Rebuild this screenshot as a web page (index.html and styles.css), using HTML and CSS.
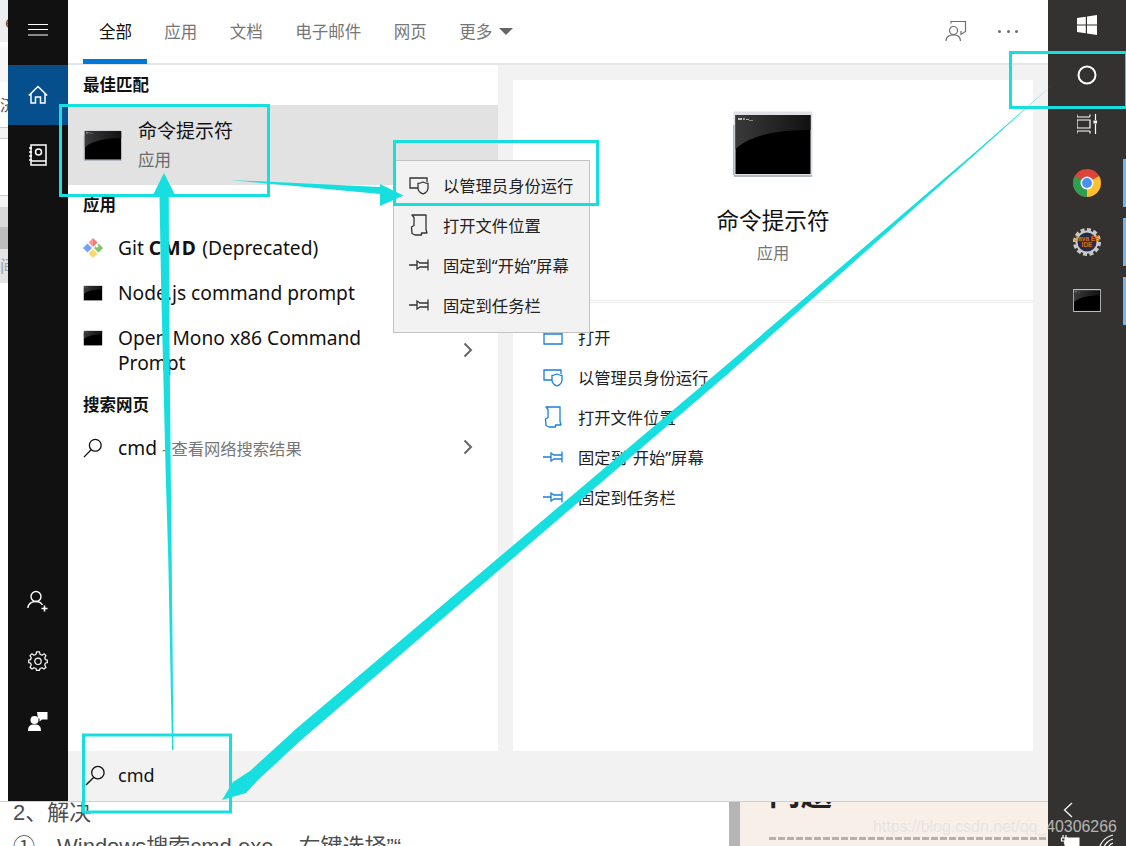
FILE: index.html
```html
<!DOCTYPE html>
<html lang="zh-CN">
<head>
<meta charset="utf-8">
<title>Windows 搜索</title>
<link rel="stylesheet" href="styles.css">
</head>
<body>
<svg class="defs" width="0" height="0" aria-hidden="true">
  <defs>
    <linearGradient id="cmdGlow" x1="0" y1="0" x2="1" y2="0">
      <stop offset="0" stop-color="#3a3a3a"/>
      <stop offset="1" stop-color="#111"/>
    </linearGradient>
    <symbol id="cmdIcon" viewBox="0 0 80 66">
      <rect x="0.5" y="0.5" width="79" height="65" fill="#dfe1e6"/>
      <rect x="1" y="64" width="78" height="2" fill="#b4b9c3"/>
      <rect x="0" y="14" width="1.5" height="50" fill="#b0b6c0"/>
      <rect x="2.5" y="4" width="75" height="59" fill="#000"/>
      <path d="M2.5 4H77.5V19C50 19 20 22 2.500 38Z" fill="url(#cmdGlow)"/>
      <rect x="5" y="7" width="4" height="2" fill="#bbb"/>
      <rect x="10" y="7" width="2" height="2" fill="#999"/>
      <rect x="13" y="8" width="3" height="1" fill="#aaa"/>
      <rect x="16" y="9" width="4" height="1" fill="#888"/>
    </symbol>
    <symbol id="shieldIcon" viewBox="0 0 20 20">
      <path d="M9 13H1V3H18V7" fill="none" stroke="currentColor" stroke-width="1.300"/>
      <path d="M9 8.500C11 8.500 12 7.800 14 7C16 7.800 17 8.500 19 8.500V13C19 16 16.500 18 14 19C11.500 18 9 16 9 13Z" fill="#fff0" stroke="currentColor" stroke-width="1.300"/>
    </symbol>
    <symbol id="folderIcon" viewBox="0 0 20 22">
      <path d="M3 1H17V15.500L18 19H12.500V21H6L3 19.500L2.500 13L5 11.500V3.500L3 1ZM5 3.500V11.500" fill="none" stroke="currentColor" stroke-width="1.300" stroke-linejoin="round"/>
    </symbol>
    <symbol id="pinIcon" viewBox="0 0 20 14">
      <path d="M0 7H8M8 3L11 5H19V1.500V12.500V9H11L8 11Z" fill="none" stroke="currentColor" stroke-width="1.300"/>
    </symbol>
    <symbol id="openIcon" viewBox="0 0 20 20">
      <path d="M1 3H19V17H1ZM1 7H19" fill="none" stroke="currentColor" stroke-width="1.300"/>
    </symbol>
    <symbol id="searchIcon" viewBox="0 0 22 22">
      <circle cx="13.500" cy="8" r="6.500" fill="none" stroke="currentColor" stroke-width="1.400"/>
      <path d="M9 13L1 21" fill="none" stroke="currentColor" stroke-width="1.400"/>
    </symbol>
    <symbol id="chevronIcon" viewBox="0 0 10 16">
      <path d="M1.500 1.500L8 8L1.500 14.500" fill="none" stroke="currentColor" stroke-width="2"/>
    </symbol>
  </defs>
</svg>

<div class="screen">
  <div class="desktop">
    <div class="window-row">
      <div class="page-edge">
        <div class="edge edge-a"><span class="edge-glyph edge-glyph-e">e</span></div>
        <div class="edge edge-b"></div>
        <div class="edge edge-c"></div>
        <div class="edge edge-d"><span class="edge-glyph">济</span></div>
        <div class="edge edge-e"></div>
        <div class="edge edge-f"></div>
        <div class="edge edge-g"></div>
        <div class="edge edge-h"></div>
        <div class="edge edge-i"></div>
        <div class="edge edge-j"><span class="edge-glyph">间</span></div>
        <div class="edge edge-k"></div>
      </div>

      <nav class="rail">
        <div class="rail-group">
          <div class="rail-btn rail-menu">
            <svg width="20" height="14" viewBox="0 0 20 14"><path d="M0 1.500H20M0 6.500H20M0 12H20" stroke="#fff" stroke-width="1.200"/></svg>
          </div>
          <div class="rail-btn rail-on">
            <svg width="20" height="20" viewBox="0 0 20 20"><path d="M0.800 10.500L10 1.500L19.200 10.500M3 8.500V18H7.500V12H12.500V18H17V8.500" fill="none" stroke="#fff" stroke-width="1.500"/></svg>
          </div>
          <div class="rail-btn">
            <svg width="20" height="22" viewBox="0 0 20 22"><path d="M3 1H18V21H3ZM1 4H4M1 8H4M1 12H4M1 16H4M3 17H18" fill="none" stroke="#fff" stroke-width="1.500"/><circle cx="10.500" cy="8" r="3" fill="none" stroke="#fff" stroke-width="1.500"/></svg>
          </div>
        </div>
        <div class="rail-group">
          <div class="rail-btn">
            <svg width="22" height="22" viewBox="0 0 22 22"><circle cx="9" cy="6.500" r="5" fill="none" stroke="#fff" stroke-width="1.400"/><path d="M0.800 18C1.500 13.500 4.500 11.500 9 11.500C12 11.500 14 12.500 15.500 15" fill="none" stroke="#fff" stroke-width="1.400"/><path d="M14.500 18.500H20.500M17.500 15.500V21.500" stroke="#fff" stroke-width="1.600"/></svg>
          </div>
          <div class="rail-btn">
            <svg width="20" height="20" viewBox="0 0 20 20"><path d="M8.500 0.800H11.500L12 3.300L14 4.200L16.200 2.800L18 4.600L16.700 6.800L17.500 8.700L19.300 9V11.700L17.500 12L16.700 14L18 16.200L16 18L14 16.700L12 17.500L11.500 19.300H8.500L8 17.500L6 16.700L4 18L2 16.200L3.300 14L2.500 12L0.700 11.700V9L2.500 8.700L3.300 6.800L2 4.600L3.800 2.800L6 4.200L8 3.300Z" fill="none" stroke="#fff" stroke-width="1.200" stroke-linejoin="round"/><circle cx="10" cy="10.300" r="3.200" fill="none" stroke="#fff" stroke-width="1.200"/></svg>
          </div>
          <div class="rail-btn">
            <svg width="20" height="20" viewBox="0 0 20 20"><circle cx="6.500" cy="9" r="4" fill="#fff"/><path d="M0 20C0 15 2 13.500 6.500 13.500C11 13.500 13 15 13 20Z" fill="#fff"/><path d="M9 1H19.500V8.500H14L11.500 10.500V7.500H10Z" fill="#fff"/></svg>
          </div>
        </div>
      </nav>

      <main class="search">
        <header class="tabs">
          <div class="tab-list">
            <span class="tab tab-on">全部</span>
            <span class="tab">应用</span>
            <span class="tab">文档</span>
            <span class="tab">电子邮件</span>
            <span class="tab">网页</span>
            <span class="tab">更多<i class="caret"></i></span>
          </div>
          <div class="tab-tools">
            <svg class="tool-icon" width="22" height="22" viewBox="0 0 22 22"><path d="M6 3.500V1.500H20.500V11.500L16 14.500V11" fill="none" stroke="#6e6e6e" stroke-width="1.200"/><circle cx="8.500" cy="10.500" r="4" fill="none" stroke="#6e6e6e" stroke-width="1.200"/><path d="M1 21C1 16.500 4 14.800 8.500 14.800C13 14.800 15.500 16.500 15.500 21" fill="none" stroke="#6e6e6e" stroke-width="1.200"/></svg>
            <span class="dots"><i></i><i></i><i></i></span>
          </div>
        </header>

        <div class="panes">
          <section class="results">
            <h2 class="group-title">最佳匹配</h2>
            <div class="best">
              <svg class="best-icon"><use href="#cmdIcon"/></svg>
              <div class="best-text">
                <div class="best-name">命令提示符</div>
                <div class="best-kind">应用</div>
              </div>
            </div>
            <h2 class="group-title">应用</h2>
            <div class="row">
              <svg class="row-icon" viewBox="0 0 20 20"><path d="M10 0L14.500 4.500L10 9Z" fill="#f47a7a"/><path d="M10 0L5.500 4.500L10 9Z" fill="#f79a9a"/><path d="M0 10L4.500 5.500L9 10L4.500 14.500Z" fill="#6ea5f7"/><path d="M10 11L14.500 15.500L10 20L5.500 15.500Z" fill="#f9d86c"/><path d="M11 10L15.500 5.500L20 10L15.500 14.500Z" fill="#7cc562"/><circle cx="14" cy="8" r="1.500" fill="#fff"/></svg>
              <span class="row-text">Git <b class="row-strong">CMD</b> (Deprecated)</span>
            </div>
            <div class="row">
              <svg class="row-icon row-icon-cmd"><use href="#cmdIcon"/></svg>
              <span class="row-text">Node.js command prompt</span>
            </div>
            <div class="row row-tall">
              <svg class="row-icon row-icon-cmd row-icon-top"><use href="#cmdIcon"/></svg>
              <span class="row-text row-wrap">Open Mono x86 Command Prompt</span>
              <svg class="chev"><use href="#chevronIcon"/></svg>
            </div>
            <h2 class="group-title">搜索网页</h2>
            <div class="row">
              <svg class="row-icon"><use href="#searchIcon"/></svg>
              <span class="row-text row-text-web">cmd <small class="row-hint">- 查看网络搜索结果</small></span>
              <svg class="chev chev-web"><use href="#chevronIcon"/></svg>
            </div>
          </section>

          <section class="detail">
            <div class="hero">
              <svg class="hero-icon"><use href="#cmdIcon"/></svg>
              <div class="hero-name">命令提示符</div>
              <div class="hero-kind">应用</div>
            </div>
            <ul class="actions">
              <li class="action"><svg class="action-icon"><use href="#openIcon"/></svg>打开</li>
              <li class="action"><svg class="action-icon"><use href="#shieldIcon"/></svg>以管理员身份运行</li>
              <li class="action"><svg class="action-icon action-tall"><use href="#folderIcon"/></svg>打开文件位置</li>
              <li class="action"><svg class="action-icon action-pin"><use href="#pinIcon"/></svg>固定到“开始”屏幕</li>
              <li class="action"><svg class="action-icon action-pin"><use href="#pinIcon"/></svg>固定到任务栏</li>
            </ul>
          </section>
        </div>

        <div class="query">
          <svg class="query-icon"><use href="#searchIcon"/></svg>
          <span class="query-text">cmd</span>
        </div>
      </main>
    </div>

    <div class="article">
      <div class="article-text">
        <div class="article-h">2、解决</div>
        <div class="article-p"><span class="article-num">①</span>Windows搜索cmd.exe<span class="article-comma">，</span>右键选择”“</div>
      </div>
      <div class="quote">
        <div class="quote-title">问题</div>
        <div class="quote-rule"></div>
      </div>
    </div>
  </div>

  <aside class="taskbar">
    <div class="task-top">
      <div class="task-btn">
        <svg width="20" height="20" viewBox="0 0 20 20"><path d="M0 3L8.800 1.700V9.400H0ZM10 1.500L20 0V9.400H10ZM0 10.600H8.800V18.300L0 17ZM10 10.600H20V20L10 18.500Z" fill="#fff"/></svg>
      </div>
      <div class="task-btn">
        <svg width="20" height="20" viewBox="0 0 20 20"><circle cx="10" cy="10" r="8.500" fill="none" stroke="#fff" stroke-width="2"/></svg>
      </div>
      <div class="task-btn task-view">
        <svg width="20" height="20" viewBox="0 0 20 20"><path d="M0 2.500V0.500M13 0.500V2.500M0 3H13M0 6H13V14H0ZM0 17H13M0 17V19.500M13 17V19.500M18.500 0V6M18.500 10V20" fill="none" stroke="#fff" stroke-width="1.200"/><rect x="16.500" y="6.500" width="3.500" height="3" fill="#fff"/></svg>
      </div>
      <div class="task-app task-run">
        <svg width="28" height="28" viewBox="0 0 28 28"><circle cx="14" cy="14" r="14" fill="#db4437"/><path d="M14 14L26.100 7A14 14 0 0 1 14 28Z" fill="#fbc02d"/><path d="M14 14L14 28A14 14 0 0 1 1.900 7Z" fill="#2e9e4f"/><circle cx="14" cy="14" r="6.500" fill="#fff"/><circle cx="14" cy="14" r="5" fill="#4d8ff0"/></svg>
      </div>
      <div class="task-app task-run">
        <svg width="28" height="28" viewBox="0 0 28 28"><circle cx="14" cy="14" r="12.500" fill="none" stroke="#c9c9c9" stroke-width="3" stroke-dasharray="4 2.500"/><circle cx="14" cy="14" r="10.500" fill="#2a2a48" stroke="#c9c9c9" stroke-width="2"/><text class="java-text" x="14" y="12.500">Java EE</text><text class="java-text" x="14" y="19">IDE</text></svg>
      </div>
      <div class="task-app task-run">
        <svg class="task-cmd"><use href="#cmdIcon"/></svg>
      </div>
    </div>
    <div class="tray">
      <svg class="tray-chev" width="10" height="16" viewBox="0 0 10 16"><path d="M9 1L1.500 8L9 15" fill="none" stroke="#fff" stroke-width="1.200"/></svg>
      <div class="tray-icons">
        <svg width="20" height="16" viewBox="0 0 20 16"><path d="M3 1V4M6 1V4M1.500 4H7.500V7H1.500ZM4.500 7V10" fill="none" stroke="#fff" stroke-width="1.200"/><rect x="4.500" y="3.500" width="15" height="12" fill="#fff"/></svg>
        <svg width="20" height="16" viewBox="0 0 20 16"><path d="M2 16C3 9 8 3 16 1M6 16C7 11 11 6 16 5M10 16C11 13 13 10 16 9" fill="none" stroke="#fff" stroke-width="1.200"/></svg>
      </div>
    </div>
  </aside>

  <div class="context-menu">
    <div class="menu-item"><svg class="menu-icon"><use href="#shieldIcon"/></svg>以管理员身份运行</div>
    <div class="menu-item"><svg class="menu-icon menu-tall"><use href="#folderIcon"/></svg>打开文件位置</div>
    <div class="menu-item"><svg class="menu-icon menu-pin"><use href="#pinIcon"/></svg>固定到“开始”屏幕</div>
    <div class="menu-item"><svg class="menu-icon menu-pin"><use href="#pinIcon"/></svg>固定到任务栏</div>
  </div>

  <svg class="marks" width="1126" height="846" viewBox="0 0 1126 846" aria-hidden="true">
    <g fill="none" stroke="#17dfdf" stroke-width="3">
      <rect x="60.500" y="105.500" width="208" height="90"/>
      <rect x="394.500" y="141.500" width="203" height="63"/>
      <rect x="1010.500" y="52.500" width="116" height="55"/>
      <rect x="83.500" y="735" width="147" height="77"/>
    </g>
    <g fill="#17dfdf">
      <path d="M230 180L380 187V184L403.500 195.500L380 206V194Z"/>
      <path d="M173.500 750H172L168.300 560L165.600 470L161 280L159.500 195H153L164 173L175 195H168.800L169 280L170.700 470L171.700 560Z"/>
      <path d="M1052 85L980 150L730 372L300 741L258 780L246 793L222 800L233 782L250 771L297 728L730 362L980 148Z"/>
    </g>
  </svg>

  <div class="watermark">https://blog.csdn.net/qq_40306266</div>
</div>
</body>
</html>
```
FILE: styles.css
```css
* { box-sizing: border-box; }
html, body { margin: 0; padding: 0; }
body {
  width: 1126px;
  height: 846px;
  overflow: hidden;
  background: #fff;
  font-family: "Noto Sans", "Noto Sans CJK SC", sans-serif;
  color: #000;
}
.defs { position: absolute; }
svg { display: block; flex: none; }

.screen { position: relative; display: flex; width: 1126px; height: 846px; overflow: hidden; }
.desktop { width: 1048px; display: flex; flex-direction: column; }
.window-row { display: flex; height: 802px; flex: none; border-bottom: 1px solid #cfcfcf; }

/* sliver of the page behind the start menu */
.page-edge { width: 8px; display: flex; flex-direction: column; overflow: hidden; background: #fff; }
.edge { flex: none; overflow: hidden; position: relative; }
.edge-glyph { display: block; font-size: 16px; line-height: 18px; color: #555; white-space: nowrap; }
.edge-glyph-e { margin-left: 5px; }
.edge-a { height: 42px; background: #eceeef; padding-top: 13px; }
.edge-b { height: 5px; background: #fff; }
.edge-c { height: 35px; background: #f7f7f7; }
.edge-d { height: 45px; background: #fff; padding-top: 14px; }
.edge-e { height: 12px; background: #f3f3f3; border-top: 1px solid #ccc; border-bottom: 1px solid #ccc; }
.edge-f { height: 56px; background: #fff; }
.edge-g { height: 12px; background: #f4f4f4; border-top: 1px solid #ccc; }
.edge-h { height: 20px; background: #d8d8d8; }
.edge-i { height: 22px; background: #bdbdbd; }
.edge-j { height: 34px; background: #e4e4e4; padding-top: 8px; }
.edge-j .edge-glyph { color: #98a2ad; }
.edge-k { flex: 1; background: #fff; }

/* dark left rail */
.rail { width: 60px; background: #111; display: flex; flex-direction: column; justify-content: space-between; padding-bottom: 50px; }
.rail-btn { height: 60px; display: flex; align-items: center; justify-content: center; }
.rail-menu { height: 65px; padding-bottom: 5px; }
.rail-on { background: #054f8c; }

/* search flyout */
.search { flex: 1; display: flex; flex-direction: column; min-width: 0; background: #f2f2f2; }
.tabs { height: 65px; flex: none; background: #fff; border-bottom: 2px solid #e6e6e6; display: flex; justify-content: space-between; padding-left: 15px; }
.tab-list { display: flex; height: 64px; }
.tab { display: flex; align-items: center; padding: 3px 16.250px 0; height: 64px; font-size: 16.500px; color: #767676; border-bottom: 5px solid transparent; }
.tab-on { color: #111; border-bottom-color: #0078d7; padding: 3px 15px 0 16px; margin-right: 1px; }
.caret { width: 0; height: 0; margin-left: 7px; border: 7px solid transparent; border-top: 7px solid #666; border-bottom: 0; }
.tab-tools { display: flex; align-items: center; gap: 31px; padding-right: 30px; height: 62px; }
.dots { display: flex; gap: 5.500px; }
.dots i { width: 3px; height: 3px; border-radius: 50%; background: #6e6e6e; }

.panes { flex: 1; display: flex; min-height: 0; }
.results { width: 430px; background: #fff; flex: none; position: relative; }
.group-title { margin: 0; height: 40px; padding: 0 0 2px 15px; display: flex; align-items: center; font-size: 16.500px; font-weight: 700; color: #111; }
.best { height: 80px; background: #e2e2e2; display: flex; align-items: center; padding-left: 15px; gap: 15px; }
.best-icon { width: 40px; height: 32px; }
.best-text { display: flex; flex-direction: column; }
.best-name { font-size: 19px; line-height: 28px; color: #111; margin-top: -1px; }
.best-kind { font-size: 16.500px; line-height: 24px; color: #6b6b6b; margin-top: 3px; }

.row { position: relative; height: 45px; display: flex; align-items: center; padding: 0 50px 0 15px; font-size: 19.200px; color: #111; gap: 15px; }
.row-tall { height: 70px; }
.row-icon { width: 20px; height: 20px; }
.row-icon-cmd { height: 16px; }
.row-icon-top { align-self: flex-start; margin-top: 15px; }
.row-text { line-height: 25px; white-space: nowrap; }
.row-text-web { padding-top: 2px; }
.row-strong { letter-spacing: 1.300px; }
.row-wrap { white-space: normal; width: 255px; }
.row-hint { font-size: 16.300px; color: #767676; }
.chev { position: absolute; right: 25px; top: 50%; margin-top: -8px; width: 10px; height: 16px; color: #666; }
.chev-web { margin-top: -9px; }

.detail { width: 520px; margin: 15px 15px 0; background: #fff; flex: none; }
.hero { height: 223px; border-bottom: 3px double #ececec; display: flex; flex-direction: column; align-items: center; padding-top: 31px; }
.hero-icon { width: 80px; height: 66px; }
.hero-name { margin-top: 27px; font-size: 22.600px; line-height: 34px; color: #111; }
.hero-kind { margin-top: 3px; font-size: 16.300px; line-height: 24px; color: #767676; }
.actions { list-style: none; margin: 14px 0 0; padding: 0 0 0 30px; }
.action { height: 40px; display: flex; align-items: center; gap: 15px; font-size: 16.300px; color: #222; }
.action-icon { width: 20px; height: 20px; color: #1a7fdc; }
.action-tall { height: 22px; }
.action-pin { height: 14px; }

.query { height: 50px; flex: none; display: flex; align-items: center; padding-left: 17px; gap: 12px; }
.query-icon { width: 21px; height: 21px; color: #111; margin-top: -1px; }
.query-text { font-size: 18px; color: #111; margin-top: -2px; }

/* article behind */
.article { flex: 1; min-height: 0; display: flex; justify-content: space-between; overflow: hidden; background: #fff; }
.article-text { padding-left: 13px; color: #4d4d4d; }
.article-h { font-family: "Liberation Sans", "Noto Sans CJK SC", sans-serif; font-size: 22px; line-height: 32px; margin-top: -5px; white-space: nowrap; }
.article-p { font-family: "Liberation Sans", "Noto Sans CJK SC", sans-serif; font-size: 22px; line-height: 32px; margin-top: 2px; white-space: nowrap; }
.article-num { display: inline-block; width: 44px; }
.article-comma { display: inline-block; width: 25px; }
.quote { width: 319px; height: 100px; background: #f8efe8; border-left: 11px solid #b5b5b5; padding-left: 29px; margin-top: -1px; }
.quote-title { font-family: "Liberation Sans", "Noto Sans CJK SC", sans-serif; font-weight: 700; font-size: 31.500px; line-height: 36px; margin-top: -25px; color: #222; }
.quote-rule { margin-top: 25px; height: 3px; background: repeating-linear-gradient(90deg, #b8afa5 0 7px, transparent 7px 9px); }

/* taskbar */
.taskbar { width: 78px; flex: none; background: #333230; display: flex; flex-direction: column; justify-content: space-between; }
.task-top { display: flex; flex-direction: column; }
.task-btn { height: 50px; display: flex; align-items: center; justify-content: center; padding-right: 0; }
.task-view { height: 48px; margin-bottom: 5px; }
.task-app { height: 59px; display: flex; align-items: center; justify-content: center; position: relative; }
.task-run::after { content: ""; position: absolute; right: 0; top: 6px; bottom: 5px; width: 3px; background: #7ab4ea; }
.task-cmd { width: 28px; height: 23px; }
.java-text { font-family: "Liberation Sans", sans-serif; font-size: 6.500px; font-weight: 700; fill: #d9750f; text-anchor: middle; }
.tray { display: flex; flex-direction: column; align-items: center; height: 46px; padding-top: 0; }
.tray-chev { margin: 0 0 14px -38px; position: relative; top: 2px; }
.tray-icons { display: flex; gap: 17px; margin-left: 2px; padding-top: 4px; }

/* overlays */
.context-menu { position: absolute; left: 393px; top: 160px; width: 197px; height: 173px; background: #f2f2f2; border: 1px solid #c4c4c4; padding-top: 4px; }
.menu-item { height: 40px; display: flex; align-items: center; gap: 14px; padding-left: 15px; font-size: 16.300px; color: #222; }
.menu-icon { width: 20px; height: 20px; color: #333; }
.menu-tall { height: 22px; }
.menu-pin { height: 14px; }

.marks { position: absolute; left: 0; top: 0; pointer-events: none; }
.watermark { position: absolute; left: 873px; top: 817px; font-family: "Liberation Sans", sans-serif; font-size: 15.900px; line-height: 20px; color: rgba(225, 225, 225, 0.75); white-space: nowrap; }
```
